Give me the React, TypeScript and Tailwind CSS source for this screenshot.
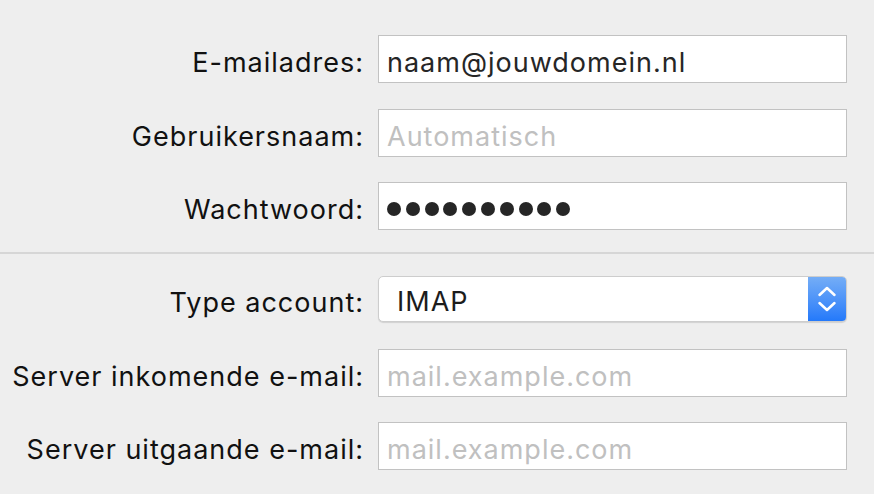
import React from 'react';

const font = "font-['Inter','Liberation_Sans',sans-serif] tracking-[1px] leading-[32px]";

const Label = ({children}: {children: React.ReactNode}) => (
    <div className="w-[364px] shrink-0 text-right text-[27px] text-[#111] pt-[8px] whitespace-nowrap">
        {children}
    </div>
);

const Field = ({value, placeholder}: {value?: string; placeholder?: string}) => (
    <div className="ml-[14px] w-[469px] h-[48px] border border-[#c2c2c2] bg-white flex items-center pl-[8px] pt-[7px] text-[27px]">
        {value ? (
            <span className="text-[#262626]">{value}</span>
        ) : (
            <span className="text-[#c0c0c0]">{placeholder}</span>
        )}
    </div>
);

const Row = ({label, children, className = ''}: {label: string; children: React.ReactNode; className?: string}) => (
    <div className={`flex items-center h-[48px] ${className}`}>
        <Label>{label}</Label>
        {children}
    </div>
);

const PasswordField = () => (
    <div className="ml-[14px] w-[469px] h-[48px] border border-[#c2c2c2] bg-white flex items-center pl-[8px] pt-[6px] gap-[4.8px]">
        {Array.from({length: 10}).map((_, i) => (
            <span key={i} className="block w-[14px] h-[14px] rounded-full bg-[#262626]"/>
        ))}
    </div>
);

const Popup = () => (
    <div className="ml-[14px] w-[469px] h-[46px] rounded-[5px] border border-[#cdcdcd] bg-white shadow-[0_1px_1px_rgba(0,0,0,0.12)] flex overflow-hidden">
        <div className="flex-1 flex items-center pl-[18px] pt-[5px] text-[27px] text-[#1c1c1c]">IMAP</div>
        <div className="w-[38px] h-full bg-gradient-to-b from-[#74adf6] to-[#2379fa] flex items-center justify-center">
            <svg width="20" height="28" viewBox="0 0 20 28" fill="none" stroke="white" strokeWidth="2.5"
                 strokeLinecap="round" strokeLinejoin="round">
                <path d="M2.5 10 L10 3 L17.5 10"/>
                <path d="M2.5 18 L10 25 L17.5 18"/>
            </svg>
        </div>
    </div>
);

export default function App() {
    return (
        <div className={`w-[874px] h-[494px] bg-[#eeeeee] overflow-hidden ${font}`}>
            <div className="pt-[35px]">
                <Row label="E-mailadres:"><Field value="naam@jouwdomein.nl"/></Row>
                <Row label="Gebruikersnaam:" className="mt-[26px]"><Field placeholder="Automatisch"/></Row>
                <Row label="Wachtwoord:" className="mt-[25px]"><PasswordField/></Row>
            </div>
            <div className="mt-[22px] h-[2px] bg-[#d6d6d6]"/>
            <div className="pt-[22px]">
                <Row label="Type account:" className="!h-[46px]"><Popup/></Row>
                <Row label="Server inkomende e-mail:" className="mt-[27px]"><Field placeholder="mail.example.com"/></Row>
                <Row label="Server uitgaande e-mail:" className="mt-[25px]"><Field placeholder="mail.example.com"/></Row>
            </div>
        </div>
    );
}
